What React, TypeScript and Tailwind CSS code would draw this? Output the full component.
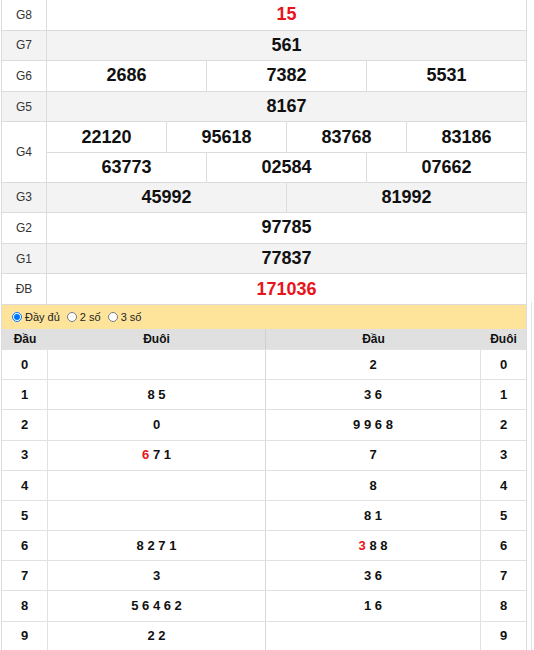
import React from 'react';

const RED = 'text-[#e8141c]';

const giaiRows: { label: string; rows: string[][]; gray: boolean; red?: boolean }[] = [
  { label: 'G8', rows: [['15']], gray: false, red: true },
  { label: 'G7', rows: [['561']], gray: true },
  { label: 'G6', rows: [['2686', '7382', '5531']], gray: false },
  { label: 'G5', rows: [['8167']], gray: true },
  { label: 'G4', rows: [['22120', '95618', '83768', '83186'], ['63773', '02584', '07662']], gray: false },
  { label: 'G3', rows: [['45992', '81992']], gray: true },
  { label: 'G2', rows: [['97785']], gray: false },
  { label: 'G1', rows: [['77837']], gray: true },
  { label: 'ĐB', rows: [['171036']], gray: false, red: true },
];

// mỗi số: [giá trị, đỏ?]
type Num = [string, boolean];
const loto: { dau: string; duoi: Num[]; dauR: Num[] }[] = [
  { dau: '0', duoi: [], dauR: [['2', false]] },
  { dau: '1', duoi: [['8', false], ['5', false]], dauR: [['3', false], ['6', false]] },
  { dau: '2', duoi: [['0', false]], dauR: [['9', false], ['9', false], ['6', false], ['8', false]] },
  { dau: '3', duoi: [['6', true], ['7', false], ['1', false]], dauR: [['7', false]] },
  { dau: '4', duoi: [], dauR: [['8', false]] },
  { dau: '5', duoi: [], dauR: [['8', false], ['1', false]] },
  { dau: '6', duoi: [['8', false], ['2', false], ['7', false], ['1', false]], dauR: [['3', true], ['8', false], ['8', false]] },
  { dau: '7', duoi: [['3', false]], dauR: [['3', false], ['6', false]] },
  { dau: '8', duoi: [['5', false], ['6', false], ['4', false], ['6', false], ['2', false]], dauR: [['1', false], ['6', false]] },
  { dau: '9', duoi: [['2', false], ['2', false]], dauR: [] },
];

const NumList: React.FC<{ items: Num[] }> = ({ items }) => (
  <span>
    {items.map(([n, red], i) => (
      <React.Fragment key={i}>
        {i > 0 && ' '}
        <span className={red ? RED : ''}>{n}</span>
      </React.Fragment>
    ))}
  </span>
);

export default function App() {
  return (
    <div className="flex bg-white font-['Liberation_Sans',Arial,sans-serif] text-[#111]">
      <div className="ml-[1px] w-[526px] border-x border-[#dcdcdc]">
        {/* Bảng kết quả */}
        {giaiRows.map((g) => (
          <div key={g.label} className={`flex border-b border-[#dcdcdc] ${g.gray ? 'bg-[#f3f3f3]' : 'bg-white'}`}>
            <div className="flex w-[45px] shrink-0 items-center justify-center border-r border-[#dcdcdc] text-[12px] text-[#333]">
              {g.label}
            </div>
            <div className="flex-1">
              {g.rows.map((r, ri) => (
                <div key={ri} className={`flex h-[29.6px] ${ri > 0 ? 'border-t border-[#dcdcdc]' : ''}`}>
                  {r.map((n, ni) => (
                    <div
                      key={ni}
                      className={`flex flex-1 items-center justify-center text-[18px] font-bold ${ni > 0 ? 'border-l border-[#dcdcdc]' : ''} ${g.red ? RED : ''}`}
                    >
                      {n}
                    </div>
                  ))}
                </div>
              ))}
            </div>
          </div>
        ))}

        {/* Chọn kiểu */}
        <div className="flex h-[24px] items-center gap-[7px] bg-[#fde49a] pl-[10px] text-[11px] text-[#222]">
          <label className="flex items-center gap-[3px]">
            <input type="radio" name="kieu" defaultChecked className="m-0 h-[10px] w-[10px]" />
            Đầy đủ
          </label>
          <label className="flex items-center gap-[3px]">
            <input type="radio" name="kieu" className="m-0 h-[10px] w-[10px]" />
            2 số
          </label>
          <label className="flex items-center gap-[3px]">
            <input type="radio" name="kieu" className="m-0 h-[10px] w-[10px]" />
            3 số
          </label>
        </div>

        {/* Bảng lô tô */}
        <div className="flex h-[20px] items-center bg-[#e0e0e0] text-[12px] font-bold">
          <div className="w-[46px] text-center">Đầu</div>
          <div className="h-full w-[218px] border-r border-[#d0d0d0] text-center leading-[20px]">Đuôi</div>
          <div className="w-[215px] text-center">Đầu</div>
          <div className="flex-1 text-center">Đuôi</div>
        </div>
        {loto.map((r) => (
          <div key={r.dau} className="flex h-[30.2px] border-t border-[#e2e2e2] text-[13px] font-bold">
            <div className="flex w-[46px] items-center justify-center border-r border-[#e2e2e2]">{r.dau}</div>
            <div className="flex w-[218px] items-center justify-center border-r border-[#d8d8d8]">
              <NumList items={r.duoi} />
            </div>
            <div className="flex w-[215px] items-center justify-center border-r border-[#e2e2e2]">
              <NumList items={r.dauR} />
            </div>
            <div className="flex flex-1 items-center justify-center">{r.dau}</div>
          </div>
        ))}
      </div>
      <div className="ml-[4px] mt-[302px] w-[3px] border-l border-[#e4e4e4]" />
    </div>
  );
}
